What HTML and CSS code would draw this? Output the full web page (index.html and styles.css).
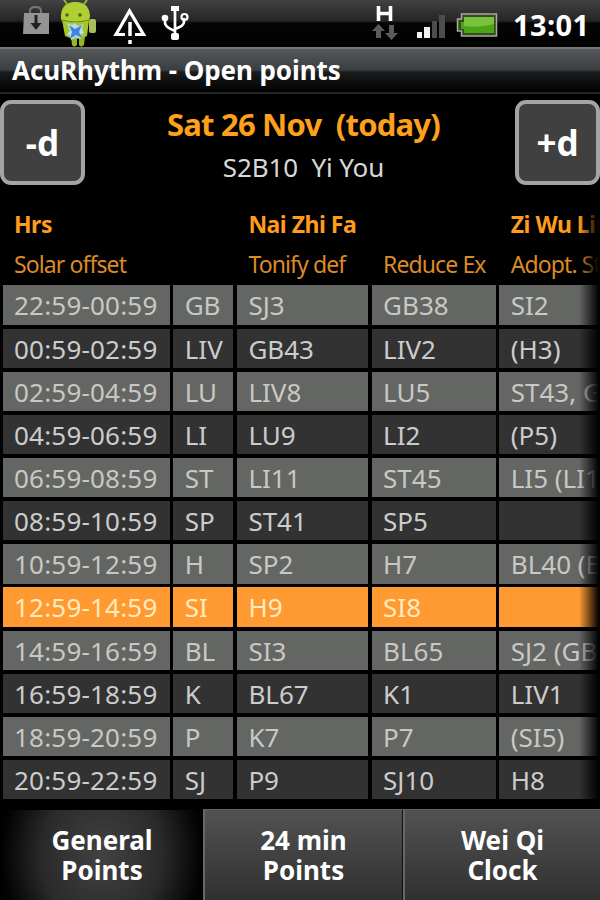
FILE: index.html
```
<!DOCTYPE html>
<html lang="en">

<head>
    <meta charset="UTF-8">
    <meta name="viewport" content="width=device-width, initial-scale=1.0">
    <title>AcuRhythm - Open points</title>
    <link rel="stylesheet" href="styles.css">
</head>

<body>
    <div class="status-bar">
        <svg class="status-icons" width="200" height="47" viewBox="0 0 200 47">
            <!-- market bag -->
            <path d="M30 14V11q0-4 5.500-4t5.500 4v3" fill="none" stroke="#777" stroke-width="2" />
            <path d="M24 13h25v21H23z" fill="#949494" />
            <path d="M34.500 15h3v8h4l-5.500 7-5.500-7h4z" fill="#222" />
            <!-- android -->
            <path d="M67 4l-3-4M84 4l3-4" stroke="#9ab82c" stroke-width="2" />
            <rect x="89" y="19" width="7" height="14" rx="2" fill="#a9bd59" />
            <path d="M71 36h6v9q-3 3-5 0zM79 36h6l-1 9q-3 3-5 0z" fill="#94b820" />
            <path d="M62 20h27l-2 16q-10 6-22 0z" fill="#a5c62b" />
            <path d="M61 19q-1-16 13-17q15-1 16 14l-1 5q-13 4-27 0z" fill="#b0cf33" />
            <path d="M62 20q13 4 27 0" fill="none" stroke="#66811d" />
            <circle cx="67" cy="15" r="1.700" fill="#4d5b21" />
            <circle cx="80" cy="15" r="1.700" fill="#4d5b21" />
            <path d="M67 23l5 2 3-2 3 3 5-2-1 5 2 4-4 2 1 4-5-2-5 3-1-4-3-2 3-3z" fill="#b7dcf4" />
            <path d="M69 25l6 4 7-4-3 7 3 6-6-3-6 4 2-7z" fill="#4385db" />
            <!-- warning -->
            <path d="M129.500 11L116 34.500h27.500z" fill="none" stroke="#fff" stroke-width="3.200" />
            <path d="M125 31h10v8h-10z" fill="#080808" />
            <path d="M130 22v14M130 40v4" stroke="#fff" stroke-width="3.500" />
            <!-- usb -->
            <path d="M175 9v27M165 19v4q0 4 10 8M184 18v4q0 4-9 7" fill="none" stroke="#fff" stroke-width="2.700" />
            <path d="M171 6h8v5h-8z" fill="#fff" />
            <rect x="171" y="33" width="8" height="7" rx="2" fill="#fff" />
            <circle cx="165" cy="18" r="3.300" fill="#fff" />
            <circle cx="184.500" cy="17" r="3" fill="none" stroke="#fff" stroke-width="2.200" />
        </svg>
        <svg class="status-icons" width="145" height="47" viewBox="365 0 145 47">
            <!-- data connection -->
            <path d="M378.500 6v15M390.500 6v15M378.500 13.500h12" fill="none" stroke="#fff" stroke-width="3.600" />
            <path d="M378.500 24l6.500 7h-4v7h-5v-7h-4zM391.500 40l-6.500-7h4v-8h5v8h4z" fill="#5b5b5b" />
            <!-- signal -->
            <path d="M417 32h5v6h-5zM424 27h6v11h-6z" fill="#f0f0f0" />
            <path d="M432 21h5v17h-5zM439 15h6v23h-6z" fill="#4d4d4d" />
            <!-- battery -->
            <path d="M461.500 14h35v22h-35v-5h-4V19h4z" fill="#354c22" stroke="#a6a99c" stroke-width="1.500" />
            <path d="M464 17h30v16h-30v-4h-3v-7h3z" fill="#4ba514" />
            <path d="M464 17h30v7q-15 4-30 2z" fill="#79c23e" />
        </svg>
        <div class="clock">13:01</div>
    </div>
    <div class="title-bar"><span>AcuRhythm - Open points</span></div>

    <div class="day-header">
        <button class="day-btn">-d</button>
        <div class="day-info">
            <div class="date">Sat 26 Nov&nbsp; (today)</div>
            <div class="stem">S2B10&nbsp; Yi You</div>
        </div>
        <button class="day-btn">+d</button>
    </div>

    <div class="points">
        <div class="row head">
            <div>Hrs</div><div></div><div>Nai Zhi Fa</div><div></div><div>Zi Wu Liu</div>
        </div>
        <div class="row subhead">
            <div>Solar offset</div><div></div><div>Tonify def</div><div>Reduce Ex</div><div>Adopt. St</div>
        </div>
        <div class="hours">
            <div class="row light"><div>22:59-00:59</div><div>GB</div><div>SJ3</div><div>GB38</div><div>SI2</div></div>
            <div class="row"><div>00:59-02:59</div><div>LIV</div><div>GB43</div><div>LIV2</div><div>(H3)</div></div>
            <div class="row light"><div>02:59-04:59</div><div>LU</div><div>LIV8</div><div>LU5</div><div>ST43, G</div></div>
            <div class="row"><div>04:59-06:59</div><div>LI</div><div>LU9</div><div>LI2</div><div>(P5)</div></div>
            <div class="row light"><div>06:59-08:59</div><div>ST</div><div>LI11</div><div>ST45</div><div>LI5 (LI1</div></div>
            <div class="row"><div>08:59-10:59</div><div>SP</div><div>ST41</div><div>SP5</div><div></div></div>
            <div class="row light"><div>10:59-12:59</div><div>H</div><div>SP2</div><div>H7</div><div>BL40 (B</div></div>
            <div class="row current"><div>12:59-14:59</div><div>SI</div><div>H9</div><div>SI8</div><div></div></div>
            <div class="row light"><div>14:59-16:59</div><div>BL</div><div>SI3</div><div>BL65</div><div>SJ2 (GB</div></div>
            <div class="row"><div>16:59-18:59</div><div>K</div><div>BL67</div><div>K1</div><div>LIV1</div></div>
            <div class="row light"><div>18:59-20:59</div><div>P</div><div>K7</div><div>P7</div><div>(SI5)</div></div>
            <div class="row"><div>20:59-22:59</div><div>SJ</div><div>P9</div><div>SJ10</div><div>H8</div></div>
        </div>
    </div>

    <div class="tabs">
        <div class="tab active">General<br>Points</div>
        <div class="tab">24 min<br>Points</div>
        <div class="tab">Wei Qi<br>Clock</div>
    </div>
</body>

</html>
```

FILE: styles.css
```
body {
    margin: 0;
    width: 600px;
    height: 900px;
    overflow: hidden;
    display: flex;
    flex-direction: column;
    background-color: #000;
    color: #fff;
    font-family: "Noto Sans", sans-serif;
}

.status-bar {
    height: 47px;
    flex: none;
    display: flex;
    background: linear-gradient(#424242, #252525 21px, #050505 23px, #000);
}

.status-icons + .status-icons {
    margin-left: 165px;
}

.clock {
    margin-left: 3px;
    font-size: 29px;
    font-weight: bold;
    line-height: 50px;
    letter-spacing: 0.4px;
}

.title-bar {
    height: 47px;
    flex: none;
    box-sizing: border-box;
    border-top: 2px solid #777;
    border-bottom: 2px solid #252525;
    padding-left: 12px;
    background: linear-gradient(#54585a, #3b3e40 21px, #1b1c1d 23px, #030303 41px);
    font-size: 26px;
    font-weight: bold;
    line-height: 43px;
    letter-spacing: -0.07px;
    white-space: nowrap;
}

.day-header {
    height: 111px;
    flex: none;
    box-sizing: border-box;
    padding-top: 6px;
    display: flex;
    justify-content: space-between;
}

.day-btn {
    width: 85px;
    height: 85px;
    padding: 0;
    border: 4px solid #a4a4a4;
    border-radius: 11px;
    background-color: #404040;
    color: #fff;
    font-family: inherit;
    font-size: 35px;
    font-weight: bold;
}

.day-info {
    padding-left: 7px;
    text-align: center;
    white-space: nowrap;
}

.date {
    color: #ffa01c;
    font-size: 31px;
    font-weight: bold;
    line-height: 48px;
    letter-spacing: -0.8px;
}

.stem {
    color: #d8d8d8;
    font-size: 26px;
    line-height: 38px;
    letter-spacing: -0.1px;
}

.points {
    height: 604px;
    flex: none;
    position: relative;
    overflow: hidden;
}

.points::after {
    content: "";
    position: absolute;
    top: 0;
    right: 0;
    width: 21px;
    height: 100%;
    background: linear-gradient(to right, transparent, #000 95%);
}

.row {
    display: grid;
    grid-template-columns: 167px 60px 131px 124px 200px;
    column-gap: 3.7px;
    padding-left: 2.5px;
    white-space: nowrap;
}

.row div {
    padding-left: 11.5px;
}

.head {
    height: 39px;
    color: #ff9c1c;
    font-size: 23px;
    font-weight: bold;
    line-height: 39px;
    letter-spacing: -0.5px;
}

.subhead {
    height: 41px;
    color: #dc8a26;
    font-size: 23px;
    line-height: 40px;
    letter-spacing: -0.9px;
}

.hours {
    display: grid;
    grid-auto-rows: 39.4px;
    row-gap: 3.75px;
    padding-top: 0.4px;
}

.hours .row {
    color: #ccc;
    font-size: 26px;
    line-height: 41px;
}

.hours .row div {
    height: 39.4px;
    background-color: #323232;
}

.hours .row div:first-child {
    letter-spacing: 0.2px;
}

.hours .light div {
    background-color: #646664;
    color: #c8c8c4;
}

.hours .current div {
    background-color: #ff9a32;
    color: #ffebc0;
}

.tabs {
    flex: 1;
    display: grid;
    grid-template-columns: 203px 200px 197px;
}

.tab {
    box-sizing: border-box;
    border-left: 2px solid #686868;
    border-top: 1px solid #626262;
    border-right: 1px solid #111;
    padding-top: 15px;
    background: linear-gradient(#525252, #303030);
    font-size: 26px;
    font-weight: bold;
    line-height: 30px;
    text-align: center;
}

.tab:last-child {
    border-right: none;
}

.tab.active {
    border-color: #000;
    background: radial-gradient(ellipse 100px 120px at center, #424242, #2a2a2a 60%, #020202);
}
```
